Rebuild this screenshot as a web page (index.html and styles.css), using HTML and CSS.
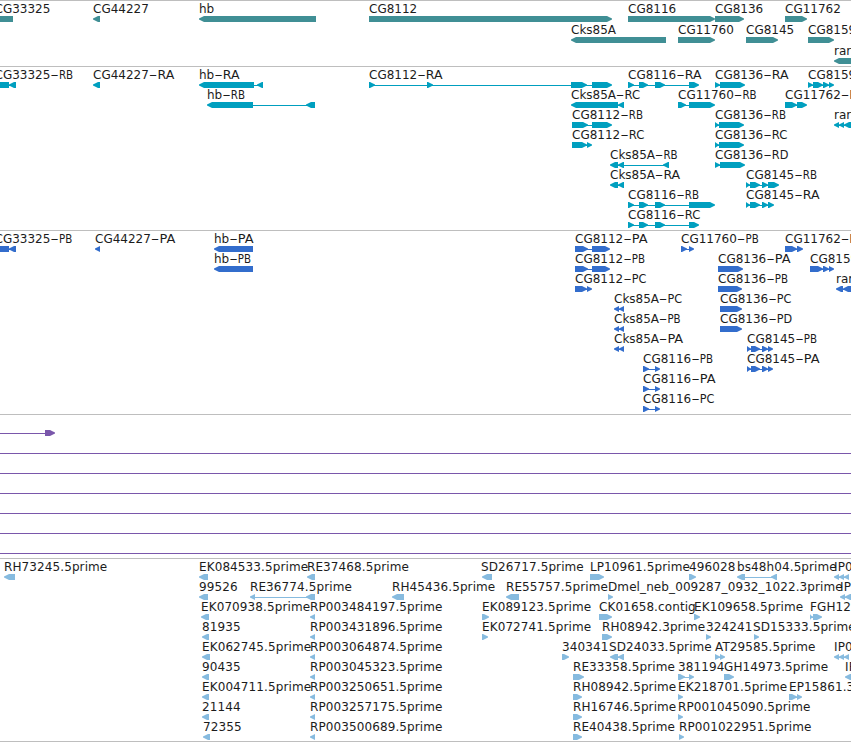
FILE: index.html
```
<!DOCTYPE html>
<html lang="en">
  <head>
    <meta charset="UTF-8" />
    <meta name="viewport" content="width=device-width, initial-scale=1.0" />
    <title>Genome Browser</title>
    <link rel="stylesheet" href="styles.css">
  </head>
  <body>
    <main class="tracks">
      <section class="track track-gene" id="gene"></section>
      <section class="track track-transcript" id="transcript"></section>
      <section class="track track-cds" id="cds"></section>
      <section class="track track-span" id="span"></section>
      <section class="track track-est" id="est"></section>
    </main>
    <script src="tracks.js"></script>
  </body>
</html>
```

FILE: styles.css
```
body {
  margin: 0;
  background-color: #ffffff;
  font-family: "DejaVu Sans", sans-serif;
  font-size: 12px;
  overflow: hidden;
}
.tracks {
  display: flex;
  flex-direction: column;
  border-bottom: 1px solid #bebebe;
}
.track {
  box-sizing: border-box;
  border-top: 1px solid #bebebe;
  overflow: hidden;
}
.track svg {
  display: block;
  width: 100%;
  height: 100%;
}
.track text {
  fill: #1c1c1c;
}
.track-gene {
  height: 66px;
  color: #408f95;
}
.track-transcript {
  height: 164px;
  color: #009fbf;
}
.track-cds {
  height: 184px;
  color: #336dcc;
}
.track-span {
  height: 144px;
  color: #7a57ab;
}
.track-est {
  height: 183px;
  color: #87bbdf;
  letter-spacing: 0.1px;
}
.glyph {
  fill: currentColor;
}
```

FILE: tracks.js
```
const SVG = 'http://www.w3.org/2000/svg';

// feature: [row, label, label x, strand, [[start, end], ...]]
const gene = [
  [0, 'CG33325', -5.5, -1, [[-10, 13]]],
  [0, 'CG44227', 93, -1, [[93, 100]]],
  [0, 'hb', 199, -1, [[199, 316]]],
  [0, 'CG8112', 369, 1, [[369, 612]]],
  [0, 'CG8116', 628, 1, [[628, 715]]],
  [0, 'CG8136', 715, 1, [[715, 744]]],
  [0, 'CG11762', 785, 1, [[785, 807]]],
  [1, 'Cks85A', 571, -1, [[571, 666]]],
  [1, 'CG11760', 678, 1, [[678, 715]]],
  [1, 'CG8145', 746, 1, [[746, 778]]],
  [1, 'CG8159', 808, 1, [[808, 834]]],
  [2, 'ran', 834, -1, [[834, 870]]]
];

const transcript = [
  [0, 'CG33325-RB', -5.5, -1, [[-10, 9], [9, 16]]],
  [0, 'CG44227-RA', 93, -1, [[93, 100]]],
  [0, 'hb-RA', 199, -1, [[199, 254], [257, 263]]],
  [0, 'CG8112-RA', 369, 1, [[369, 375], [427, 433], [571, 587], [592, 612]]],
  [0, 'CG8116-RA', 628, 1, [[628, 634], [639, 648], [655, 665], [689, 699]]],
  [0, 'CG8136-RA', 715, 1, [[715, 720], [720, 745]]],
  [0, 'CG8159-RA', 808, 1, [[808, 813], [813, 823], [823, 829], [829, 834]]],
  [1, 'hb-RB', 207, -1, [[207, 253], [306, 315]]],
  [1, 'Cks85A-RC', 571, -1, [[571, 618], [618, 624]]],
  [1, 'CG11760-RB', 678, 1, [[678, 686], [689, 715]]],
  [1, 'CG11762-RB', 785, 1, [[785, 797], [797, 807]]],
  [2, 'CG8112-RB', 572, 1, [[572, 588], [592, 612]]],
  [2, 'CG8136-RB', 715, 1, [[715, 719], [719, 744]]],
  [2, 'ran-RA', 834, -1, [[834, 839], [839, 844], [844, 870]]],
  [3, 'CG8112-RC', 572, 1, [[572, 587], [587, 592]]],
  [3, 'CG8136-RC', 715, 1, [[715, 719], [719, 744]]],
  [4, 'Cks85A-RB', 610, -1, [[610, 618], [618, 624], [663, 669]]],
  [4, 'CG8136-RD', 715, 1, [[715, 720], [720, 745]]],
  [5, 'Cks85A-RA', 610, -1, [[610, 618], [618, 624]]],
  [5, 'CG8145-RB', 746, 1, [[746, 750], [750, 760], [762, 768], [768, 779]]],
  [6, 'CG8116-RB', 628, 1, [[628, 634], [639, 648], [655, 665], [689, 715]]],
  [6, 'CG8145-RA', 746, 1, [[746, 750], [750, 760], [762, 768], [768, 774]]],
  [7, 'CG8116-RC', 628, 1, [[628, 634], [639, 648], [655, 665], [689, 699]]]
];

const cds = [
  [0, 'CG33325-PB', -5.5, -1, [[-10, 9], [9, 16]]],
  [0, 'CG44227-PA', 95, -1, [[95, 100]]],
  [0, 'hb-PA', 214, -1, [[214, 253]]],
  [0, 'CG8112-PA', 575, 1, [[575, 588], [592, 610]]],
  [0, 'CG11760-PB', 681, 1, [[681, 687], [689, 694]]],
  [0, 'CG11762-PB', 785, 1, [[785, 797], [797, 803]]],
  [1, 'hb-PB', 214, -1, [[214, 253]]],
  [1, 'CG8112-PB', 575, 1, [[575, 588], [592, 610]]],
  [1, 'CG8136-PA', 718, 1, [[718, 743]]],
  [1, 'CG8159-PA', 810, 1, [[810, 823], [823, 829], [829, 834]]],
  [2, 'CG8112-PC', 575, 1, [[575, 587], [587, 592]]],
  [2, 'CG8136-PB', 718, 1, [[718, 742]]],
  [2, 'ran-PA', 836, -1, [[836, 843], [843, 870]]],
  [3, 'Cks85A-PC', 614, -1, [[614, 619], [619, 624]]],
  [3, 'CG8136-PC', 720, 1, [[720, 742]]],
  [4, 'Cks85A-PB', 614, -1, [[614, 619], [619, 624]]],
  [4, 'CG8136-PD', 720, 1, [[720, 742]]],
  [5, 'Cks85A-PA', 614, -1, [[614, 619], [619, 624]]],
  [5, 'CG8145-PB', 747, 1, [[747, 751], [751, 760], [762, 768], [768, 773]]],
  [6, 'CG8116-PB', 643, 1, [[643, 649], [655, 660]]],
  [6, 'CG8145-PA', 747, 1, [[747, 751], [751, 760], [762, 768], [768, 773]]],
  [7, 'CG8116-PA', 643, 1, [[643, 649], [655, 660]]],
  [8, 'CG8116-PC', 643, 1, [[643, 649], [655, 660]]]
];

// unlabelled features, most of them run past both edges
const span = [
  [0, '', 0, 1, [[-20, -10], [45, 55]]],
  [1, '', 0, 1, [[-20, -10], [2000, 2010]]],
  [2, '', 0, 1, [[-20, -10], [2000, 2010]]],
  [3, '', 0, 1, [[-20, -10], [2000, 2010]]],
  [4, '', 0, 1, [[-20, -10], [2000, 2010]]],
  [5, '', 0, 1, [[-20, -10], [2000, 2010]]],
  [6, '', 0, 1, [[-20, -10], [2000, 2010]]]
];

const est = [
  [0, 'RH73245.5prime', 4, -1, [[4, 15]]],
  [0, 'EK084533.5prime', 199, -1, [[199, 208]]],
  [0, 'RE37468.5prime', 307, -1, [[307, 315]]],
  [0, 'SD26717.5prime', 481, -1, [[482, 492]]],
  [0, 'LP10961.5prime', 590, 1, [[590, 604]]],
  [0, '496028', 689, 1, [[689, 696]]],
  [0, 'bs48h04.5prime', 737, -1, [[737, 745], [771, 777]]],
  [0, 'IP0', 834, -1, [[834, 839], [839, 844], [844, 849]]],
  [1, '99526', 199, -1, [[199, 208]]],
  [1, 'RE36774.5prime', 250, -1, [[250, 255], [306, 315]]],
  [1, 'RH45436.5prime', 392, -1, [[392, 404]]],
  [1, 'RE55757.5prime', 506, -1, [[506, 519]]],
  [1, 'Dmel_neb_009287_0932_1022.3prime', 608, 1, [[608, 613]]],
  [1, 'IP', 840, -1, [[840, 845], [845, 870]]],
  [2, 'EK070938.5prime', 201, -1, [[201, 209]]],
  [2, 'RP003484197.5prime', 310, -1, [[310, 315]]],
  [2, 'EK089123.5prime', 482, 1, [[482, 489]]],
  [2, 'CK01658.contig', 599, 1, [[599, 612]]],
  [2, 'EK109658.5prime', 694, 1, [[694, 700]]],
  [2, 'FGH12', 810, 1, [[810, 813], [813, 822]]],
  [3, '81935', 202, -1, [[202, 209]]],
  [3, 'RP003431896.5prime', 310, -1, [[310, 315]]],
  [3, 'EK072741.5prime', 482, 1, [[482, 488]]],
  [3, 'RH08942.3prime', 602, 1, [[602, 612]]],
  [3, '324241', 706, 1, [[706, 711]]],
  [3, 'SD15333.5prime', 753, 1, [[754, 759]]],
  [4, 'EK062745.5prime', 202, -1, [[202, 210]]],
  [4, 'RP003064874.5prime', 310, -1, [[310, 315]]],
  [4, '340341', 562, 1, [[562, 569]]],
  [4, 'SD24033.5prime', 609, -1, [[610, 618], [618, 624]]],
  [4, 'AT29585.5prime', 715, 1, [[715, 720], [720, 725]]],
  [4, 'IP0', 834, -1, [[834, 839], [839, 844], [844, 849]]],
  [5, '90435', 202, -1, [[202, 209]]],
  [5, 'RP003045323.5prime', 310, -1, [[310, 315]]],
  [5, 'RE33358.5prime', 573, 1, [[573, 584]]],
  [5, '381194', 678, 1, [[678, 685], [689, 694]]],
  [5, 'GH14973.5prime', 724, 1, [[724, 734]]],
  [5, 'IP', 845, -1, [[845, 870]]],
  [6, 'EK004711.5prime', 202, -1, [[202, 209]]],
  [6, 'RP003250651.5prime', 310, -1, [[310, 315]]],
  [6, 'RH08942.5prime', 573, 1, [[573, 582]]],
  [6, 'EK218701.5prime', 678, 1, [[678, 683]]],
  [6, 'EP15861.3prime', 789, 1, [[789, 797], [797, 802]]],
  [7, '21144', 202, -1, [[202, 209]]],
  [7, 'RP003257175.5prime', 310, -1, [[310, 315]]],
  [7, 'RH16746.5prime', 573, 1, [[573, 582]]],
  [7, 'RP001045090.5prime', 678, 1, [[678, 683]]],
  [8, '72355', 203, -1, [[203, 210]]],
  [8, 'RP003500689.5prime', 310, -1, [[310, 315]]],
  [8, 'RE40438.5prime', 573, 1, [[573, 582]]],
  [8, 'RP001022951.5prime', 679, 1, [[679, 684]]]
];

// widths of the isoform names
const suffixWidth = {
  RA: 16.8, RB: 14.2, RC: 15.6, RD: 16.6,
  PA: 15.8, PB: 13.2, PC: 14.6, PD: 15.4
};

function add(parent, name, attrs) {
  const el = document.createElementNS(SVG, name);
  for (const key in attrs) el.setAttribute(key, attrs[key]);
  parent.appendChild(el);
  return el;
}

// box with a pointed end on the strand side
function arrow(start, end, strand, y) {
  const head = Math.min(5, end - start);
  const from = strand > 0 ? start : end;
  const tip = strand > 0 ? end : start;
  const neck = tip - strand * head;
  const mid = tip - strand * 2;
  return [
    [from, y], [neck, y], [mid, y + 1.6], [tip, y + 2.5],
    [tip, y + 3.5], [mid, y + 4.4], [neck, y + 6], [from, y + 6]
  ].join(' ');
}

function drawTrack(id, features, pitch) {
  const svg = add(document.getElementById(id), 'svg', {});
  features.forEach(([row, label, x, strand, parts]) => {
    const y = 15 + row * pitch;
    const g = add(svg, 'g', { class: 'glyph' });
    if (parts.length > 1) {
      const left = parts[0][0];
      const right = parts[parts.length - 1][1];
      add(g, 'rect', { x: left + 2, y: y + 3, width: right - left - 4, height: 1 });
    }
    parts.forEach(([start, end]) => {
      add(g, 'polygon', { points: arrow(start, end, strand, y) });
    });
    if (!label) return;
    const text = add(svg, 'text', { x: x, y: y - 3 });
    const [name, suffix] = label.split('-');
    text.append(name);
    if (suffix) {
      // wide hyphen before the isoform name
      const dash = add(text, 'tspan', { textLength: 8.6, lengthAdjust: 'spacingAndGlyphs' });
      dash.textContent = '-';
      const isoform = add(text, 'tspan', { textLength: suffixWidth[suffix], lengthAdjust: 'spacingAndGlyphs' });
      isoform.textContent = suffix;
    }
  });
}

drawTrack('gene', gene, 21);
drawTrack('transcript', transcript, 20);
drawTrack('cds', cds, 20);
drawTrack('span', span, 20);
drawTrack('est', est, 20);
```
